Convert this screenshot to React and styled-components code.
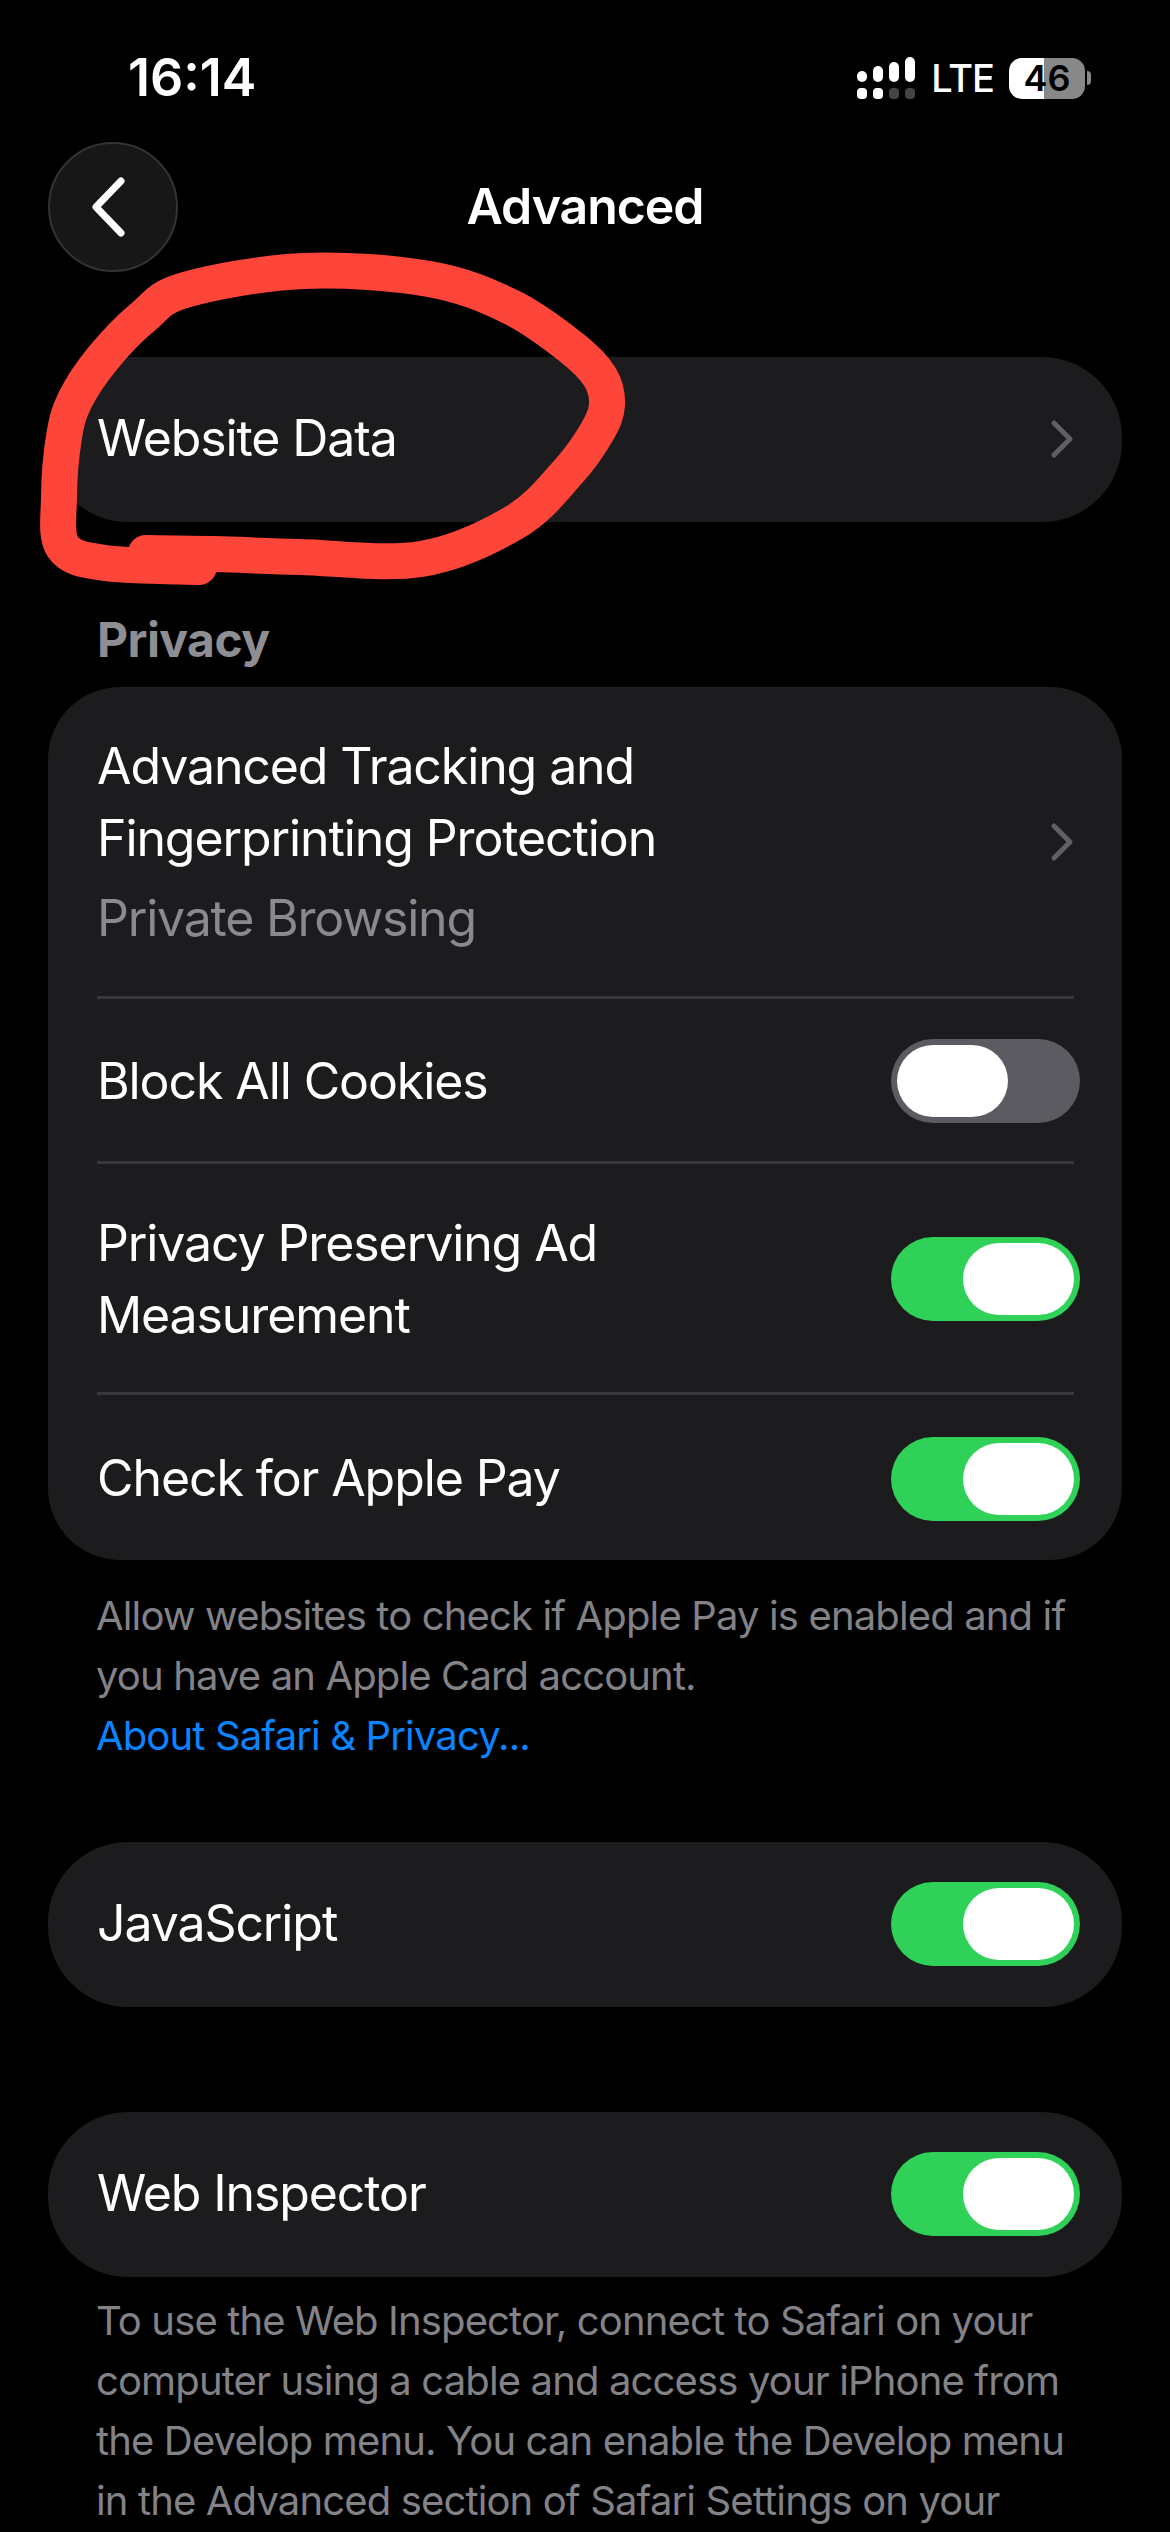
import React from "react";
import styled, { createGlobalStyle } from "styled-components";

const Global = createGlobalStyle`
  html, body { margin: 0; padding: 0; background: #000; }
  body { font-family: Inter, "Noto Sans", sans-serif; color: #fff; -webkit-font-smoothing: antialiased; }
`;
const Page = styled.div`
  position: relative; width: 1170px; height: 2532px; overflow: hidden; background: #000;
`;
const StatusBar = styled.div`
  display: flex; align-items: center; justify-content: space-between;
  height: 156px; padding: 0 79px 0 128px; box-sizing: border-box;
`;
const Time = styled.div`
  font-size: 52px; font-weight: 600; letter-spacing: 0; line-height: 1; width: 130px;
`;
const StatusRight = styled.div`display: flex; align-items: center; gap: 15px;`;
const Lte = styled.div`font-size: 38px; font-weight: 500; letter-spacing: -1px; line-height: 1;`;
const Battery = styled.div`
  position: relative; width: 76px; height: 41px; border-radius: 13px; overflow: hidden;
  background: linear-gradient(90deg, #fff 0 46%, #888 46% 100%);
  display: flex; align-items: center; justify-content: center;
  color: #000; font-size: 36px; font-weight: 600; letter-spacing: 0;
`;
const BatteryWrap = styled.div`display: flex; align-items: center; gap: 2px;`;
const Nub = styled.div`width: 4px; height: 14px; border-radius: 0 4px 4px 0; background: #888;`;
const Nav = styled.div`
  display: grid; grid-template-columns: 130px 1fr 130px; align-items: center;
  padding: 0 48px; height: 130px; margin-top: -14px;
`;
const Back = styled.div`
  width: 130px; height: 130px; box-sizing: border-box; border-radius: 50%; padding-right: 8px;
  background: #171717; border: 2px solid #333; display: flex; align-items: center; justify-content: center;
`;
const Title = styled.div`text-align: center; font-size: 50px; font-weight: 600; letter-spacing: -1.05px; padding-bottom: 3px;`;
const Card = styled.div`
  margin: ${(p) => p.$top}px 48px 0; background: #1c1c1e; border-radius: ${(p) => p.$radius || 72}px; overflow: hidden;
`;
const Row = styled.div`
  display: flex; align-items: center; justify-content: space-between;
  height: ${(p) => p.$h}px; padding: ${(p) => p.$nudge || 0}px 42px 2px 49px; box-sizing: border-box;
`;
const RowText = styled.div`
  font-size: 50px; line-height: 72.5px; font-weight: 400; letter-spacing: -1.1px; white-space: pre-line;
`;
const SubText = styled.div`
  font-size: 50px; line-height: 72px; color: #8a8a8e; letter-spacing: -1.2px; margin-top: 7px;
`;
const Divider = styled.div`height: 3px; margin: 0 48px 0 49px; background: #38383a;`;
const SectionHead = styled.div`
  margin: 0; padding: 93px 0 0 97px; height: 72px; line-height: 50px; box-sizing: content-box;
  font-size: 48px; font-weight: 700; color: #8e8e93; letter-spacing: -0.55px;
`;
const Foot = styled.div`
  padding: ${(p) => p.$top}px 50px 0 96px; font-size: 40px; line-height: 60px; color: #828287; letter-spacing: -0.86px; white-space: pre-line;
`;
const FootLink = styled.div`color: #0a84ff;`;
const Track = styled.div`
  display: flex; width: 189px; height: 84px; padding: 6px; box-sizing: border-box; flex: none; border-radius: 42px; margin-top: ${(p) => p.$drop || 0}px;
  background: ${(p) => (p.$on ? "#30d158" : "#5c5b62")};
  justify-content: ${(p) => (p.$on ? "flex-end" : "flex-start")};
`;
const Knob = styled.div`width: 111px; height: 72px; border-radius: 36px; background: #fff;`;
const Mark = styled.svg`position: absolute; left: 0; top: 0; pointer-events: none;`;
const ChevronIcon = styled.svg`margin-right: 6px; flex: none;`;

const Chevron = () => (
  <ChevronIcon width="24" height="40" viewBox="0 0 24 40" fill="none">
    <path d="M4 4 L20 20 L4 36" stroke="#5f5f64" strokeWidth="5" strokeLinecap="round" strokeLinejoin="round" />
  </ChevronIcon>
);
const Toggle = ({ on, drop }) => <Track $on={on} $drop={drop}><Knob /></Track>;

const strokePoints = [
  [146, 553], [215, 554], [300, 557], [421, 559], [515, 522], [568, 472], [597, 432], [607, 405], [600, 377],
  [572, 348], [511, 307], [429, 279], [303, 271], [185, 290], [143, 317], [103, 358], [75, 400], [64, 437],
  [59, 497], [63, 547], [105, 563], [199, 567],
];
const smoothPath = (pts) => {
  let d = `M${pts[0][0]} ${pts[0][1]}`;
  for (let i = 0; i < pts.length - 1; i++) {
    const p0 = pts[Math.max(i - 1, 0)];
    const p1 = pts[i];
    const p2 = pts[i + 1];
    const p3 = pts[Math.min(i + 2, pts.length - 1)];
    d += ` C${p1[0] + (p2[0] - p0[0]) / 6} ${p1[1] + (p2[1] - p0[1]) / 6} ${p2[0] - (p3[0] - p1[0]) / 6} ${p2[1] - (p3[1] - p1[1]) / 6} ${p2[0]} ${p2[1]}`;
  }
  return d;
};

export default function App() {
  return (
    <Page>
      <Global />
      <StatusBar>
        <Time>16:14</Time>
        <StatusRight>
          <svg width="60" height="42" viewBox="0 0 60 42">
            <g fill="#fff">
              <rect x="1" y="14" width="10" height="11" rx="5" />
              <rect x="17" y="9" width="10" height="16" rx="5" />
              <rect x="33" y="5" width="10" height="20" rx="5" />
              <rect x="49" y="0" width="10" height="25" rx="5" />
              <rect x="1" y="31" width="10" height="11" rx="4" />
              <rect x="17" y="31" width="10" height="11" rx="4" />
            </g>
            <rect x="33" y="31" width="10" height="11" rx="4" fill="#444" />
            <rect x="49" y="31" width="10" height="11" rx="4" fill="#444" />
          </svg>
          <Lte>LTE</Lte>
          <BatteryWrap>
            <Battery>46</Battery>
            <Nub />
          </BatteryWrap>
        </StatusRight>
      </StatusBar>
      <Nav>
        <Back>
          <svg width="44" height="64" viewBox="0 0 44 64" fill="none">
            <path d="M34 6 L9 32 L34 58" stroke="#fff" strokeWidth="7" strokeLinecap="round" strokeLinejoin="round" />
          </svg>
        </Back>
        <Title>Advanced</Title>
        <div />
      </Nav>
      <Card $top={85} $radius={80}>
        <Row $h={165}>
          <RowText>Website Data</RowText>
          <Chevron />
        </Row>
      </Card>
      <SectionHead>Privacy</SectionHead>
      <Card $top={0}>
        <Row $h={309} $nudge={2}>
          <div>
            <RowText>{"Advanced Tracking and\nFingerprinting Protection"}</RowText>
            <SubText>Private Browsing</SubText>
          </div>
          <Chevron />
        </Row>
        <Divider />
        <Row $h={162} $nudge={4}>
          <RowText>Block All Cookies</RowText>
          <Toggle />
        </Row>
        <Divider />
        <Row $h={228} $nudge={4}>
          <RowText>{"Privacy Preserving Ad\nMeasurement"}</RowText>
          <Toggle on />
        </Row>
        <Divider />
        <Row $h={165} $nudge={4}>
          <RowText>Check for Apple Pay</RowText>
          <Toggle on />
        </Row>
      </Card>
      <Foot $top={26}>
        {"Allow websites to check if Apple Pay is enabled and if\nyou have an Apple Card account."}
        <FootLink>About Safari &amp; Privacy...</FootLink>
      </Foot>
      <Card $top={76} $radius={80}>
        <Row $h={165}>
          <RowText>JavaScript</RowText>
          <Toggle on drop={1} />
        </Row>
      </Card>
      <Card $top={105} $radius={80}>
        <Row $h={165}>
          <RowText>Web Inspector</RowText>
          <Toggle on drop={1} />
        </Row>
      </Card>
      <Foot $top={14}>
        {"To use the Web Inspector, connect to Safari on your\ncomputer using a cable and access your iPhone from\nthe Develop menu. You can enable the Develop menu\nin the Advanced section of Safari Settings on your"}
      </Foot>
      <Mark width="1170" height="2532" viewBox="0 0 1170 2532" fill="none">
        <path d={smoothPath(strokePoints)} stroke="#fe453a" strokeWidth="36" strokeLinecap="round" strokeLinejoin="round" />
      </Mark>
    </Page>
  );
}
